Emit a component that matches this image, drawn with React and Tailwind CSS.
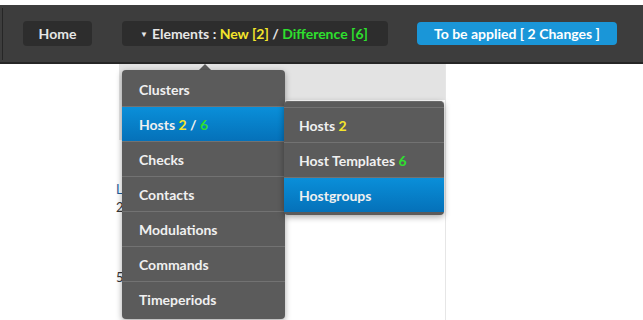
import React from "react";

const Y = ({ children }) => <span className="text-[#f4e52b]">{children}</span>;
const G = ({ children }) => <span className="text-[#2ee02e]">{children}</span>;

const App = () => {
  const items = [
    { label: "Clusters" },
    {
      label: (
        <span>
          Hosts <Y>2</Y> / <G>6</G>
        </span>
      ),
      active: true,
    },
    { label: "Checks" },
    { label: "Contacts" },
    { label: "Modulations" },
    { label: "Commands" },
    { label: "Timeperiods" },
  ];

  const subItems = [
    {
      label: (
        <span>
          Hosts <Y>2</Y>
        </span>
      ),
    },
    {
      label: (
        <span>
          Host Templates <G>6</G>
        </span>
      ),
    },
    { label: "Hostgroups", active: true },
  ];

  return (
    <div className="w-[643px] h-[320px] bg-white overflow-hidden font-['Lato','Liberation_Sans',sans-serif] font-bold text-[14px]">
      {/* top bar */}
      <div className="mt-[5px] h-[59px] bg-[#3d3d3d] border-b-2 border-[#262626] flex items-center pl-[2px] pr-[26px]">
        <div className="w-[1px] h-[52px] bg-[#262626]" />
        <div className="ml-[20px] h-[25px] w-[69px] rounded-[4px] bg-[#2d2d2d] text-[#e6e6e6] flex items-center justify-center">
          Home
        </div>
        <div className="ml-[30px] h-[25px] w-[266px] rounded-[4px] bg-[#2d2d2d] text-[#e6e6e6] flex items-center pl-[18px]">
          <span className="text-[8px] mr-[4px]">▼</span>
          <span>
            Elements : <Y>New [2]</Y> / <G>Difference [6]</G>
          </span>
        </div>
        <div className="ml-[29px] h-[23px] w-[200px] rounded-[4px] bg-[#1a96d8] text-white flex items-center justify-center">
          To be applied [ 2 Changes ]
        </div>
      </div>

      {/* page underneath */}
      <div className="relative">
        <div className="ml-[116px] w-[330px] h-[256px] border-r border-[#e6e6e6]">
          <div className="ml-[3px] h-[36px] bg-[#e3e3e3]" />
          <div className="ml-[3px] w-[4px] h-[40px] bg-[#e8e8e8]" />
          <div className="mt-[40px] font-normal text-[13px] leading-[18px]">
            <div className="text-[#1d5d9b]">L</div>
            <div className="text-[#333]">2</div>
            <div className="mt-[52px] text-[#333]">5</div>
          </div>
        </div>

        {/* caret */}
        <div className="absolute left-[199px] top-0 w-0 h-0 border-l-[6px] border-r-[6px] border-b-[6px] border-l-transparent border-r-transparent border-b-[#5b5b5b]" />

        {/* main dropdown */}
        <div className="absolute left-[122px] top-[6px] w-[163px] rounded-[4px] bg-[#5b5b5b] py-[2px] shadow-[0_2px_6px_rgba(0,0,0,0.35)] text-[#f0f0f0]">
          {items.map((it, i) => (
            <div
              key={i}
              className={
                "h-[35px] flex items-center pl-[17px] " +
                (i < items.length - 1 ? "border-b border-[#727272] " : "") +
                (it.active ? "bg-gradient-to-b from-[#0a8fd9] to-[#0571b9]" : "")
              }
            >
              {it.label}
            </div>
          ))}
        </div>

        {/* sub dropdown */}
        <div className="absolute left-[284px] top-[37px] w-[160px] rounded-[4px] bg-[#5b5b5b] pt-[5px] pb-[3px] shadow-[0_2px_6px_rgba(0,0,0,0.35)] text-[#f0f0f0] border-t border-[#6a6a6a]">
          {subItems.map((it, i) => (
            <div
              key={i}
              className={
                "h-[35px] flex items-center pl-[15px] border-t border-[#727272] " +
                (it.active ? "bg-gradient-to-b from-[#0a8fd9] to-[#0571b9]" : "")
              }
            >
              {it.label}
            </div>
          ))}
        </div>
      </div>
    </div>
  );
};

export default App;
